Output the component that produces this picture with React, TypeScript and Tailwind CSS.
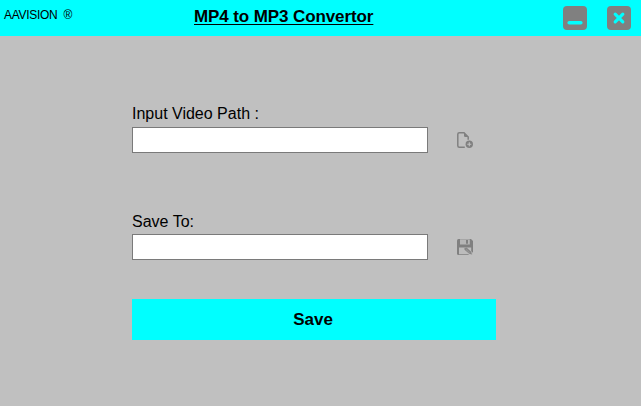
import { useState } from 'react';
import type { ReactNode } from 'react';

function WindowButton({ label, children }: { label: string; children: ReactNode }) {
  return (
    <button aria-label={label} className="size-6 rounded bg-[#808080]">
      <svg viewBox="0 0 24 24" className="size-6" fill="none" stroke="#00ffff" strokeLinecap="round">
        {children}
      </svg>
    </button>
  );
}

function TitleBar() {
  return (
    <header className="flex h-9 items-start bg-[#00ffff] pr-2.5 pl-1">
      <span className="mt-[7px] w-[190px] text-[12px] leading-4 tracking-[-0.3px] whitespace-pre">AAVISION  ®</span>
      <h1 className="mt-[7px] text-[17px] leading-5 font-bold tracking-[-0.1px] whitespace-nowrap underline decoration-1 underline-offset-2">
        MP4 to MP3 Convertor
      </h1>
      <div className="mt-1.5 ml-auto flex gap-5">
        <WindowButton label="Minimize">
          <path d="M6.2 16.8h11.6" strokeWidth="3.6" />
        </WindowButton>
        <WindowButton label="Close">
          <path d="M8.2 8.2l7.6 7.6M15.8 8.2l-7.6 7.6" strokeWidth="3.2" />
        </WindowButton>
      </div>
    </header>
  );
}

function FileAddIcon() {
  return (
    <svg viewBox="0 0 16 16" className="size-4" fill="none">
      <path d="M7.8 15.2H2.3Q.8 15.2.8 13.7V2.3Q.8.8 2.3.8H7l4.2 4.2V7.8" stroke="#808080" strokeWidth="1.5" />
      <path d="M7 .5v3.2q0 1.3 1.3 1.3h3.2z" fill="#808080" />
      <circle cx="12.3" cy="12.3" r="3.7" fill="#808080" />
      <path d="M10.3 12.3h4M12.3 10.3v4" stroke="#c0c0c0" strokeWidth="1.1" />
    </svg>
  );
}

function SaveAsIcon() {
  return (
    <svg viewBox="0 0 16 16" className="size-4" fill="none">
      <path d="M1.5 0H14l2 2v12.5q0 1.5-1.5 1.5h-13Q0 16 0 14.5v-13Q0 0 1.5 0z" fill="#808080" />
      <path d="M3 .3h9.8v5.2H3z" fill="#b6b6b6" />
      <path d="M9 1h2v3.7H9z" fill="#808080" />
      <path d="M2 8.5h12.2v3.8l1.8 1.5V16h-4l-.8-.8H2z" fill="#bcbcbc" />
      <path d="M7.3 9.3l2.3-.8 4.6 4.3.8 2.8-2.8-.8-4.7-4z" fill="#868686" />
      <path d="M9 10.4l3.8 3.7" stroke="#a6a6a6" strokeWidth=".6" />
    </svg>
  );
}

interface PathFieldProps {
  label: string;
  action: string;
  icon: ReactNode;
  className: string;
  labelClassName: string;
}

function PathField({ label, action, icon, className, labelClassName }: PathFieldProps) {
  const [path, setPath] = useState('');
  return (
    <label className={className}>
      <span className={`block h-[23px] text-[16px] ${labelClassName}`}>{label}</span>
      <span className="flex items-center">
        <input
          value={path}
          onChange={(event) => setPath(event.target.value)}
          className="h-[26px] w-[296px] border border-[#7a7a7a] bg-white px-1 outline-none"
        />
        <button aria-label={action} className="ml-[29px]">{icon}</button>
      </span>
    </label>
  );
}

export default function App() {
  return (
    <main className="h-[406px] w-[641px] overflow-hidden bg-[#c0c0c0] font-['Liberation_Sans',Arial,sans-serif] text-black">
      <TitleBar />
      <form className="flex flex-col pt-[68px] pl-[132px]" onSubmit={(event) => event.preventDefault()}>
        <PathField label="Input Video Path :" action="Choose video" icon={<FileAddIcon />} className="h-[107px]" labelClassName="leading-5" />
        <PathField label="Save To:" action="Choose destination" icon={<SaveAsIcon />} className="h-[88px]" labelClassName="leading-[22px]" />
        <button className="h-[41px] w-[364px] bg-[#00ffff] pr-0.5 text-[17px] leading-5 font-bold">Save</button>
      </form>
    </main>
  );
}
